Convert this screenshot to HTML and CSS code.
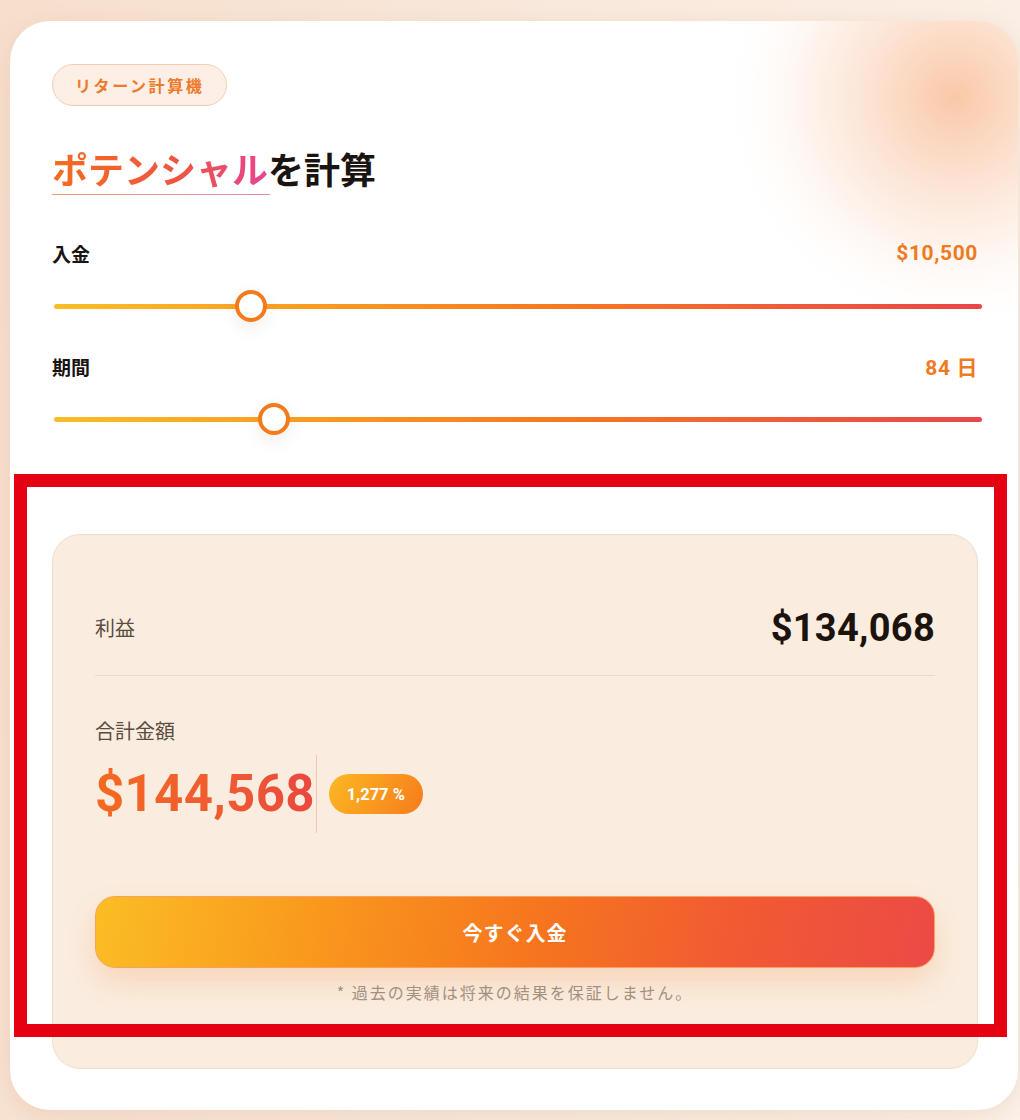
FILE: index.html
```html
<!DOCTYPE html>
<html lang="ja">
<head>
<meta charset="utf-8">
<title>リターン計算機</title>
<link rel="stylesheet" href="styles.css">
</head>
<body>
<div class="card">
  <span class="badge">リターン計算機</span>
  <h1 class="title"><span class="grad">ポテンシャル</span>を計算</h1>

  <div class="field">
    <div class="field-head">
      <span class="label">入金</span>
      <span class="value">$10,500</span>
    </div>
    <div class="slider">
      <div class="track"></div>
      <div class="thumb" style="left:21.2%"></div>
    </div>
  </div>

  <div class="field">
    <div class="field-head">
      <span class="label">期間</span>
      <span class="value">84 日</span>
    </div>
    <div class="slider">
      <div class="track"></div>
      <div class="thumb" style="left:23.7%"></div>
    </div>
  </div>

  <div class="result">
    <div class="profit-row">
      <span class="result-label">利益</span>
      <span class="profit">$134,068</span>
    </div>
    <div class="total-block">
      <div class="result-label">合計金額</div>
      <div class="total-row">
        <span class="total">$144,568</span>
        <span class="vline"></span>
        <span class="pill">1,277 %</span>
      </div>
    </div>
    <button class="cta">今すぐ入金</button>
    <p class="note">* 過去の実績は将来の結果を保証しません。</p>
  </div>
</div>
<div class="annot"></div>
</body>
</html>
```

FILE: styles.css
```css
* { box-sizing: border-box; }

html, body {
  margin: 0;
  padding: 0;
}

body {
  width: 1020px;
  height: 1120px;
  overflow: hidden;
  position: relative;
  font-family: "Noto Sans CJK JP", "Noto Sans", sans-serif;
  background: linear-gradient(100deg, #f7dfcd 0%, #f9e9dc 45%, #fbf2ea 100%);
}

.card {
  position: relative;
  overflow: hidden;
  margin: 21px 2px 0 10px;
  width: 1008px;
  height: 1089px;
  background:
    radial-gradient(circle 228px at 945px 76px,
      rgba(249, 194, 158, 0.9) 0%,
      rgba(250, 203, 172, 0.8) 18%,
      rgba(251, 215, 192, 0.66) 40%,
      rgba(252, 226, 209, 0.5) 60%,
      rgba(253, 236, 225, 0.3) 76%,
      rgba(254, 244, 238, 0.13) 89%,
      rgba(255, 255, 255, 0) 100%),
    #ffffff;
  border-radius: 40px;
  padding: 43px 40px 0 42px;
  box-shadow: 0 6px 24px rgba(214, 160, 120, 0.25);
  display: flex;
  flex-direction: column;
  align-items: flex-start;
}

.badge {
  position: relative;
  display: inline-flex;
  align-items: center;
  height: 42px;
  padding: 0 22px 0 22px;
  border-radius: 21px;
  background: #fdefe6;
  border: 1.5px solid #f6cfb3;
  color: #ee7a2c;
  font-weight: 700;
  font-size: 16px;
  letter-spacing: 2.6px;
}

.title {
  position: relative;
  margin: 39px 0 0 0;
  font-size: 36px;
  line-height: 47px;
  font-weight: 700;
  color: #1a1410;
  letter-spacing: 0;
}

.grad {
  display: inline-block;
  line-height: 47px;
  background: linear-gradient(90deg, #f46c1e 0%, #ee5640 55%, #e8448f 100%);
  -webkit-background-clip: text;
  background-clip: text;
  color: transparent;
  position: relative;
}

.grad::after {
  content: "";
  position: absolute;
  left: 0;
  right: -2px;
  bottom: -3px;
  height: 1.5px;
  background: linear-gradient(90deg, #f09a70, #e886b4);
}

.field {
  position: relative;
  width: 100%;
  margin-top: 48px;
}

.field + .field {
  margin-top: 31px;
}

.field-head {
  display: flex;
  justify-content: space-between;
  align-items: center;
  height: 26px;
}

.label {
  font-size: 19px;
  font-weight: 700;
  color: #1a1410;
}

.value {
  font-family: "Roboto", "Noto Sans CJK JP", sans-serif;
  font-size: 21px;
  font-weight: 700;
  color: #ee7a22;
  letter-spacing: 0.6px;
}

.slider {
  position: relative;
  height: 32px;
  margin: 24px -4px 0 2px;
  display: flex;
  align-items: center;
}

.track {
  width: 100%;
  height: 5px;
  border-radius: 3px;
  background: linear-gradient(90deg, #fbbd27 0%, #f89820 30%, #f6781f 55%, #ef5a3a 80%, #ea4648 100%);
}

.thumb {
  position: absolute;
  top: 0;
  width: 32px;
  height: 32px;
  margin-left: -16px;
  border-radius: 50%;
  background: #ffffff;
  border: 4px solid #f47a1c;
  box-shadow: 0 6px 16px rgba(150, 110, 90, 0.12);
}

.result {
  position: relative;
  width: 100%;
  margin-top: 99px;
  background: #faeddf;
  border: 1px solid #efdecb;
  border-radius: 28px;
  padding: 70px 42px 65px 42px;
  display: flex;
  flex-direction: column;
}

.profit-row {
  display: flex;
  justify-content: space-between;
  align-items: center;
  height: 46px;
  box-sizing: content-box;
  padding-bottom: 24px;
  border-bottom: 1.5px solid #eadbc9;
}

.result-label {
  font-size: 20px;
  line-height: 28px;
  color: #5c4b3f;
  font-weight: 400;
}

.profit {
  font-family: "Roboto", sans-serif;
  font-weight: 700;
  font-size: 38px;
  color: #1c130d;
  letter-spacing: 0.3px;
}

.total-block {
  margin-top: 41px;
}

.total-row {
  display: flex;
  align-items: center;
  height: 78px;
  margin-top: 10px;
}

.total {
  font-family: "Roboto", sans-serif;
  font-weight: 700;
  font-size: 51px;
  line-height: 60px;
  letter-spacing: 0.3px;
  background: linear-gradient(90deg, #f46a1f 0%, #ef5a33 60%, #e9483f 100%);
  -webkit-background-clip: text;
  background-clip: text;
  color: transparent;
}

.vline {
  width: 1px;
  height: 78px;
  background: #f0c4b6;
  margin: 0 12px 0 1px;
}

.pill {
  display: inline-flex;
  align-items: center;
  justify-content: center;
  height: 40px;
  width: 94px;
  border-radius: 20px;
  background: linear-gradient(120deg, #fbb824 0%, #f99a1f 50%, #f67b1c 100%);
  color: #ffffff;
  font-family: "Roboto", sans-serif;
  font-weight: 700;
  font-size: 16.5px;
}

.cta {
  flex: none;
  margin-top: 63px;
  height: 72px;
  width: 100%;
  border: 1px solid #f7a060;
  border-radius: 20px;
  background: linear-gradient(100deg, #fbbd24 0%, #f9961d 28%, #f6761e 52%, #f15a33 76%, #ec4a45 100%);
  color: #ffffff;
  font-family: "Noto Sans CJK JP", sans-serif;
  font-size: 20px;
  font-weight: 700;
  letter-spacing: 1px;
  box-shadow: 0 14px 30px rgba(245, 150, 90, 0.28);
  cursor: pointer;
}

.note {
  margin: 13px 0 0 0;
  text-align: center;
  font-size: 16px;
  line-height: 22px;
  letter-spacing: 2px;
  color: #a38f80;
}

.annot {
  position: absolute;
  left: 14px;
  top: 474px;
  width: 993px;
  height: 563px;
  border: 13px solid #e50012;
  pointer-events: none;
}
```
